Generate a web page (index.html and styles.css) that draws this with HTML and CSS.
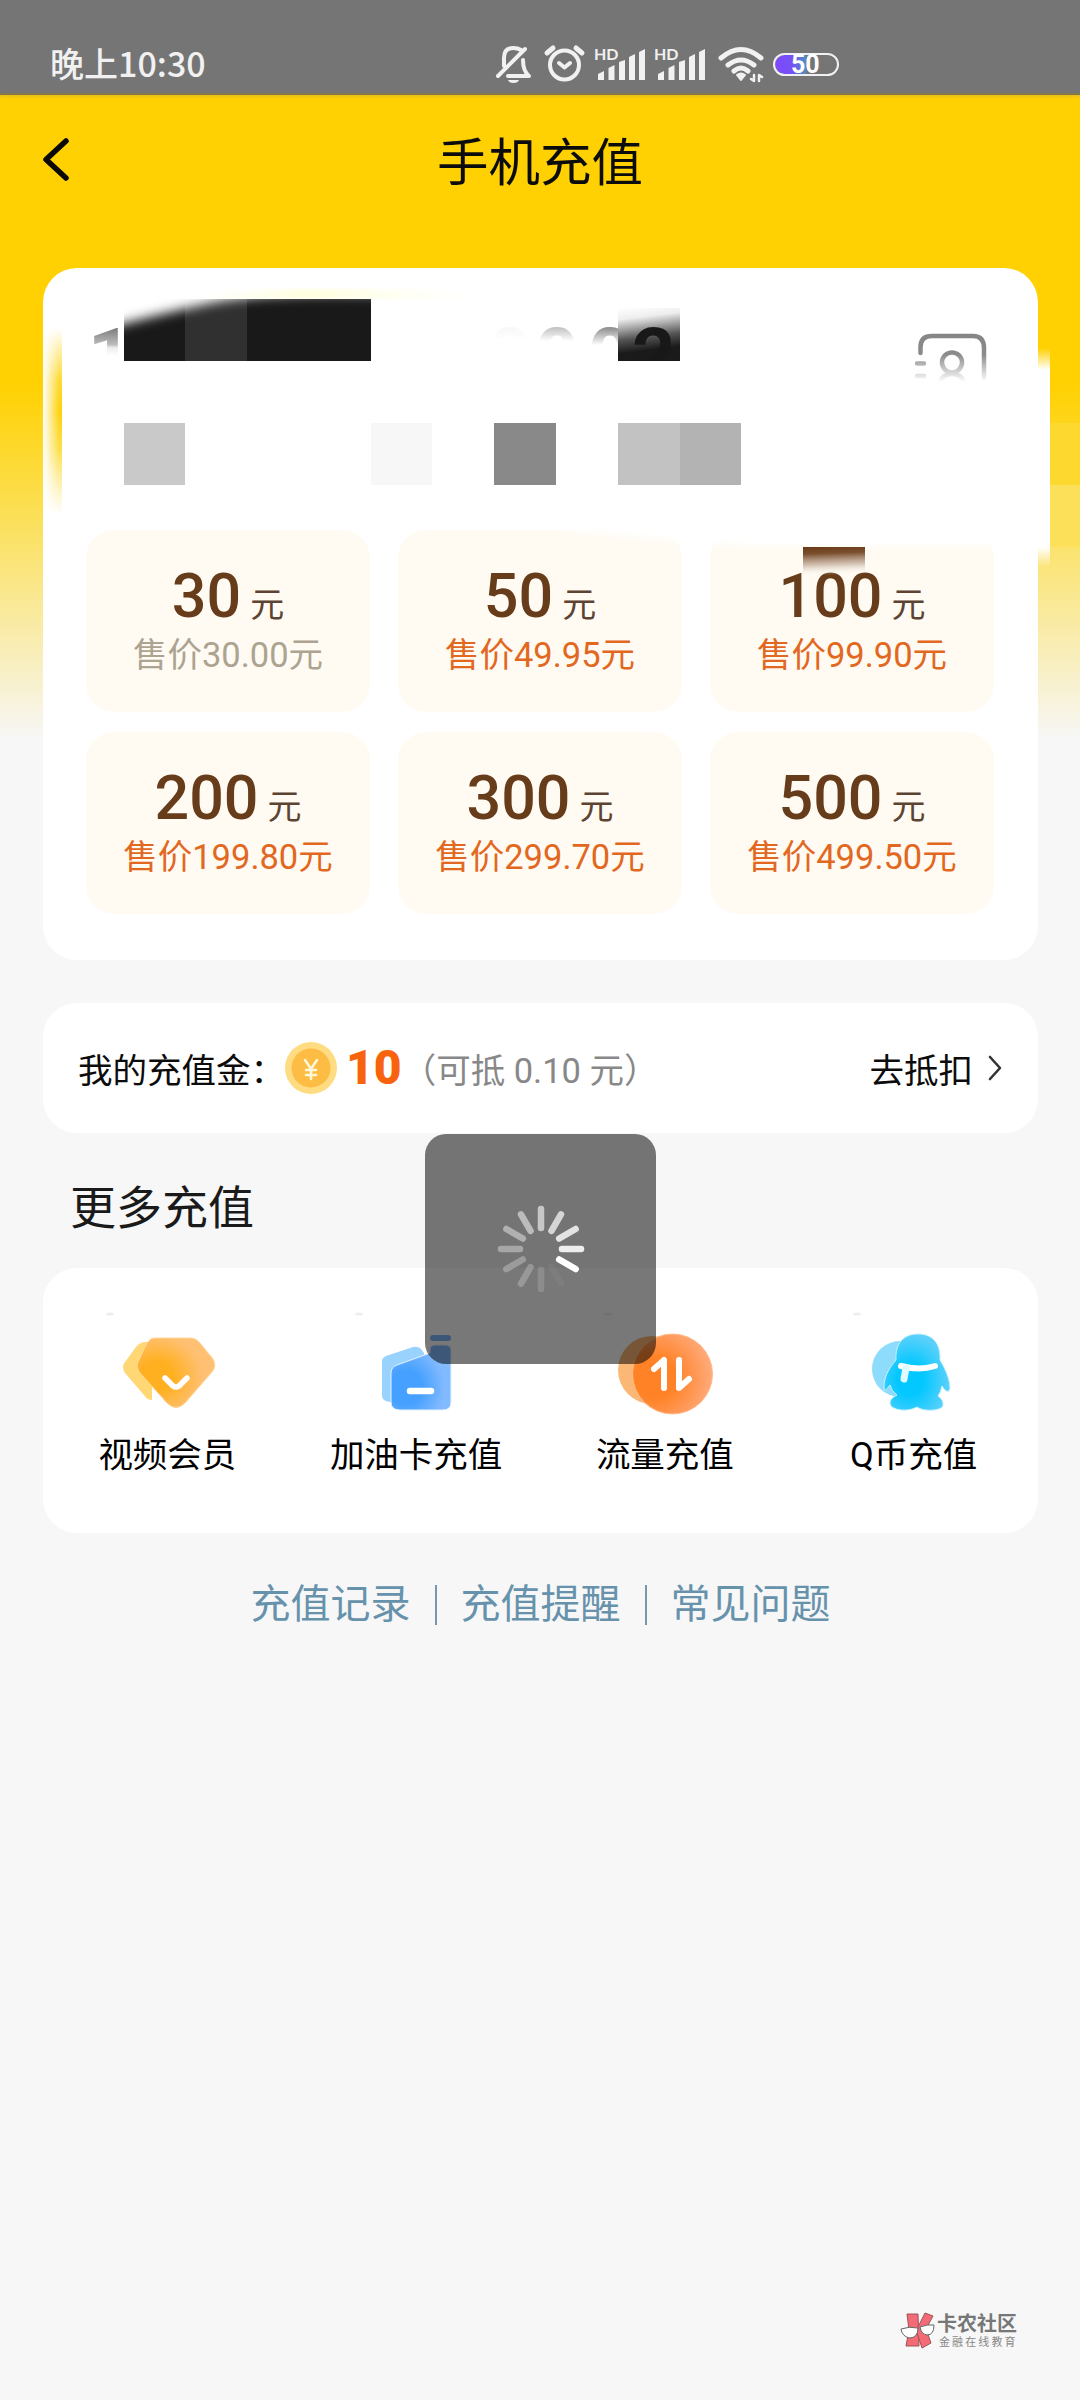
FILE: index.html
```html
<!DOCTYPE html>
<html lang="zh-CN">
<head>
<meta charset="utf-8">
<title>手机充值</title>
<link rel="stylesheet" href="styles.css">
</head>
<body>
<div class="screen">
  <header class="status">
    <span class="clock">晚上10:30</span>
    <svg class="status-icons" width="350" height="44" viewBox="492 42 350 44" fill="none" stroke="#f1f1f1" stroke-width="4" stroke-linecap="round" stroke-linejoin="round">
      <path d="M508 76H529Q523 71 523 60M504 66V58Q504 48 513 48Q518 48 521 50M498 76L525 49"/>
      <path d="M508 80H519Q518 83 513.500 83Q509 83 508 80Z" fill="#f1f1f1" stroke="none"/>
      <circle cx="564.500" cy="65" r="14.500"/><path d="M559 63L564.500 67.500L570 63"/>
      <path d="M547 53L553 48M576 48L582 53" stroke-width="5"/>
      <g fill="#f1f1f1" stroke="none">
        <path id="sig" d="M598 74L604 71V80H598ZM608.500 68L614.500 65V80H608.500ZM619 62L625 60V80H619ZM629 57L635 54V80H629ZM639 52L645 49V80H639Z"/>
        <use href="#sig" x="60"/>
        <text class="hd" x="594" y="60">HD</text><text class="hd" x="654" y="60">HD</text>
        <path d="M737 75Q741 72 745 75L741 80Z" stroke="#f1f1f1" stroke-width="2"/>
      </g>
      <path d="M721 58Q741 41 761 58M728 65Q741 55 754 65M734 71Q741 65 748 71" stroke-width="5"/>
      <path d="M754 75V81L751 79M759 81V75L762 77" stroke-width="2.500"/>
      <defs><linearGradient id="bat"><stop offset="0" stop-color="#8048ff"/><stop offset=".55" stop-color="#7652f4"/><stop offset="1" stop-color="#4c8fc4"/></linearGradient></defs>
      <path d="M806 55H785A9.500 9.500 0 0 0 785 74H806Z" fill="url(#bat)" stroke="none"/>
      <rect x="774" y="54" width="64" height="21" rx="10.500" stroke-width="2"/>
      <text class="bat" x="791" y="73">50</text>
    </svg>
  </header>

  <nav class="bar">
    <svg class="back" width="32" height="48" viewBox="0 0 32 48"><path d="M28 5L8 23.500L28 42" fill="none" stroke="#0b0906" stroke-width="5.500" stroke-linecap="round" stroke-linejoin="round"/></svg>
    <h1>手机充值</h1>
  </nav>

  <main>
    <section class="card topup">
      <div class="grid">
        <div class="tile"><p class="face"><b>30</b>元</p><p class="price plain">售价30.00元</p></div>
        <div class="tile"><p class="face"><b>50</b>元</p><p class="price">售价49.95元</p></div>
        <div class="tile"><p class="face"><b>100</b>元</p><p class="price">售价99.90元</p></div>
        <div class="tile"><p class="face"><b>200</b>元</p><p class="price">售价199.80元</p></div>
        <div class="tile"><p class="face"><b>300</b>元</p><p class="price">售价299.70元</p></div>
        <div class="tile"><p class="face"><b>500</b>元</p><p class="price">售价499.50元</p></div>
      </div>
      <svg class="redact" width="1080" height="332" viewBox="0 268 1080 332">
        <defs>
          <linearGradient id="side" x1="0" x2="0" y1="328" y2="515" gradientUnits="userSpaceOnUse"><stop offset="0" stop-color="#ffd102" stop-opacity="0"/><stop offset=".28" stop-color="#ffd102" stop-opacity=".8"/><stop offset=".45" stop-color="#ffd310"/><stop offset=".65" stop-color="#fdda2c" stop-opacity=".85"/><stop offset="1" stop-color="#fde05c" stop-opacity="0"/></linearGradient>
          <linearGradient id="edge"><stop offset="0" stop-color="#fff"/><stop offset="1" stop-color="#fff" stop-opacity="0"/></linearGradient>
          <linearGradient id="one" x1="0" x2="0" y1="327" y2="356" gradientUnits="userSpaceOnUse"><stop offset="0" stop-color="#777"/><stop offset=".6" stop-color="#bbb"/><stop offset=".72" stop-color="#eee"/><stop offset="1" stop-color="#fff"/></linearGradient>
          <linearGradient id="dim" x1="0" x2="0" y1="327" y2="345" gradientUnits="userSpaceOnUse"><stop offset="0" stop-color="#8a8a8a"/><stop offset="1" stop-color="#fff"/></linearGradient>
          <linearGradient id="pale" x1="0" x2="0" y1="326" y2="341" gradientUnits="userSpaceOnUse"><stop offset="0" stop-color="#bbb"/><stop offset="1" stop-color="#fff"/></linearGradient>
          <linearGradient id="two" x1="0" x2=".15" y1="0" y2="1"><stop offset="0" stop-color="#fff"/><stop offset=".22" stop-color="#eee"/><stop offset=".6" stop-color="#555"/><stop offset=".85" stop-color="#1a1a1a"/></linearGradient>
          <linearGradient id="brown" x1="0" x2=".08" y1="0" y2="1"><stop offset="0" stop-color="#6a3a15"/><stop offset=".25" stop-color="#7b5030"/><stop offset=".65" stop-color="#ccb9a8" stop-opacity=".8"/><stop offset="1" stop-color="#fffbf2" stop-opacity="0"/></linearGradient>
          <linearGradient id="icon" x1="0" x2="0" y1="332" y2="382" gradientUnits="userSpaceOnUse"><stop offset="0" stop-color="#858585"/><stop offset=".45" stop-color="#8b8b8b"/><stop offset="1" stop-color="#fff"/></linearGradient>
          <linearGradient id="fade" x1="0" x2="0" y1="0" y2="1"><stop offset="0" stop-color="#fff" stop-opacity="0"/><stop offset="1" stop-color="#fff"/></linearGradient>
          <linearGradient id="glow"><stop offset="0" stop-color="#ffffdc" stop-opacity="0"/><stop offset=".4" stop-color="#ffffd8"/><stop offset="1" stop-color="#ffffe8" stop-opacity="0"/></linearGradient>
          <clipPath id="digits"><rect x="90" y="320" width="32" height="40"/><rect x="480" y="320" width="138" height="30"/></clipPath>
          <clipPath id="block"><rect x="124" y="299" width="247" height="62"/></clipPath>
          <clipPath id="cell"><rect x="618" y="299" width="62" height="62"/></clipPath>
          <filter id="soft"><feGaussianBlur stdDeviation="3"/></filter>
          <filter id="smear" x="-20%" y="-50%" width="140%" height="200%"><feGaussianBlur stdDeviation="6"/></filter>
        </defs>
        <rect x="43" y="328" width="19" height="187" fill="url(#side)"/>
        <rect x="43" y="328" width="16" height="187" fill="url(#edge)"/>
        <path d="M180 299Q330 280 500 299Z" fill="url(#glow)" filter="url(#soft)"/>
        <rect x="1037" y="348" width="13" height="22" fill="url(#fade)"/>
        <rect x="1037" y="370" width="13" height="177" fill="#fff"/>
        <rect x="1037" y="547" width="13" height="20" fill="url(#fade)" transform="rotate(180 1043.500 557)"/>
        <rect x="1050" y="423" width="30" height="62" fill="#fdd82e"/>
        <rect x="1050" y="485" width="30" height="62" fill="#fce05a"/>
        <path d="M560 525H1010V546H750Q690 542 560 529Z" fill="#fff" filter="url(#soft)"/>
        <g clip-path="url(#digits)"><text class="number" x="88" y="382" fill="url(#one)">1</text><text class="number" x="488" y="382" fill="url(#pale)" opacity=".12">0</text><text class="number" x="535" y="382" fill="url(#pale)">0</text><text class="number" x="588" y="382" fill="url(#dim)">0</text></g>
        <g clip-path="url(#block)">
          <rect x="124" y="299" width="247" height="62" fill="#191919"/>
          <rect x="185" y="299" width="62" height="62" fill="#303030"/>
          <path d="M80 270H400V294Q260 291 210 303Q160 314 100 330Z" fill="#fff" filter="url(#smear)"/>
        </g>
        <rect x="618" y="308" width="62" height="53" fill="url(#two)"/>
        <g clip-path="url(#cell)"><text class="number" x="632" y="382" fill="#181818">2</text></g>
        <g fill="none" stroke="url(#icon)" stroke-width="4.500" stroke-linecap="round"><path d="M920.500 353V347Q920.500 336 932 336H973Q984 336 984 348V378"/><circle cx="952" cy="362.500" r="10"/><path d="M917 363.500H924M917 376H924M940 382Q943 374 952 374Q961 374 964 382"/></g>
        <path d="M124 423H185V485H124Z" fill="#c9c9c9"/><path d="M371 423H432V485H371Z" fill="#f7f7f7"/><path d="M494 423H556V485H494Z" fill="#898989"/><path d="M618 423H680V485H618Z" fill="#c2c2c2"/><path d="M680 423H741V485H680Z" fill="#b3b3b3"/>
        <rect x="803" y="547" width="62" height="29" fill="url(#brown)"/>
      </svg>
    </section>

    <section class="card credit">
      <span class="credit-label">我的充值金：</span>
      <svg class="coin" width="52" height="52" viewBox="0 0 52 52"><circle cx="26" cy="26" r="26" fill="#ffdc82"/><circle cx="26" cy="26" r="19.500" fill="#fdbc43"/><path d="M20 18L26 27L32 18M26 27V37M21 28H31M21 33H31" fill="none" stroke="#fff8d8" stroke-width="2.600" stroke-linecap="round"/></svg>
      <strong>10</strong>
      <span class="note">（可抵 0.10 元）</span>
      <span class="go">去抵扣</span>
      <svg class="chev" width="16" height="28" viewBox="0 0 16 28"><path d="M3 3L13 14L3 25" fill="none" stroke="#333" stroke-width="2.600" stroke-linecap="round" stroke-linejoin="round"/></svg>
    </section>

    <h2>更多充值</h2>

    <section class="card menu">
      <div class="item">
        <svg class="pic" width="110" height="90" viewBox="112 1325 110 90">
          <defs><radialGradient id="y" cx=".25" cy=".55" r=".6"><stop offset=".35" stop-color="#ffb020"/><stop offset="1" stop-color="#ffc074"/></radialGradient></defs>
          <path d="M146 1342H152V1400Q147 1400 144 1395L125 1373Q121 1367 125 1362L136 1347Q140 1342 146 1342Z" fill="#ffd775"/>
          <path d="M154 1338H191Q196 1338 200 1343L213 1359Q217 1366 212 1372L185 1403Q176 1412 167 1403L140 1373Q135 1366 139 1360L146 1345Q150 1338 154 1338Z" fill="url(#y)" stroke="#ffd69a"/>
          <path d="M165 1378L173 1386Q176 1388 179 1386L187 1378" fill="none" stroke="#fff" stroke-width="5.500" stroke-linecap="round"/>
          <ellipse cx="110" cy="1314" rx="4" ry="1.500" fill="#eee"/>
        </svg><span>视频会员</span>
      </div>
      <div class="item">
        <svg class="pic" width="110" height="90" viewBox="361 1325 110 90">
          <defs><radialGradient id="b" cx=".25" cy=".65" r=".65"><stop offset=".4" stop-color="#45a0ff"/><stop offset="1" stop-color="#82baff"/></radialGradient></defs>
          <path d="M382 1361Q382 1358 386 1356L413 1347Q418 1346 421 1349L424 1353V1402H390Q382 1401 382 1396Z" fill="#99d2fc"/>
          <path d="M391 1373Q391 1367 397 1365L430 1353V1350Q430 1345 435 1345H445Q451 1345 451 1350V1402Q451 1410 443 1410H400Q391 1410 391 1402Z" fill="url(#b)" stroke="#e4f4ff"/>
          <path d="M433 1338H448" stroke="#80b9ff" stroke-width="6" stroke-linecap="round"/><path d="M410 1391H431" stroke="#fff" stroke-width="6.500" stroke-linecap="round"/>
          <ellipse cx="359" cy="1314" rx="4" ry="1.500" fill="#eee"/>
        </svg><span>加油卡充值</span>
      </div>
      <div class="item">
        <svg class="pic" width="110" height="90" viewBox="610 1325 110 90">
          <defs><radialGradient id="o" cx=".28" cy=".55" r=".72"><stop offset=".35" stop-color="#ff8226"/><stop offset="1" stop-color="#ffaa7b"/></radialGradient></defs>
          <circle cx="652" cy="1370" r="34" fill="#fab775"/><circle cx="672.500" cy="1374" r="40" fill="url(#o)" stroke="#ffba8a"/>
          <path d="M654 1369L664 1360V1388M679 1360V1388L689 1379" fill="none" stroke="#fff" stroke-width="6" stroke-linecap="round" stroke-linejoin="round"/>
          <ellipse cx="608" cy="1314" rx="4" ry="1.500" fill="#eee"/>
        </svg><span>流量充值</span>
      </div>
      <div class="item">
        <svg class="pic" width="110" height="90" viewBox="859 1325 110 90">
          <defs><radialGradient id="q" cx=".4" cy=".6" r=".58"><stop offset=".35" stop-color="#03c8ff"/><stop offset="1" stop-color="#5ad0fb"/></radialGradient></defs>
          <circle cx="900" cy="1369" r="28" fill="#8edcfb"/>
          <path d="M896 1360C895 1344 903 1334 918 1334C933 1334 941 1344 940 1360C946 1370 950 1380 950 1388C949 1394 945 1391 942 1386Q941 1392 938 1396Q944 1400 943 1406C941 1411 923 1412 917 1407C909 1412 892 1411 890 1404C890 1399 893 1397 897 1395Q891 1391 890 1385Q884 1394 884 1387C884 1378 888 1369 896 1360Z" fill="url(#q)" stroke="#c8f2ff"/>
          <path d="M901 1366Q919 1371 935 1366" fill="none" stroke="#fff" stroke-width="6" stroke-linecap="round"/><path d="M906 1368L904 1379" stroke="#e0faff" stroke-width="7" stroke-linecap="round"/>
          <ellipse cx="857" cy="1314" rx="4" ry="1.500" fill="#eee"/>
        </svg><span>Q币充值</span>
      </div>
    </section>

    <div class="links"><a>充值记录</a><i></i><a>充值提醒</a><i></i><a>常见问题</a></div>
  </main>

  <footer class="mark">
    <svg width="36" height="38" viewBox="0 0 36 38"><g fill="#f26b76" stroke="#9d5258"><path d="M7 2L18 2L19 34L6 34L9 18Z"/><path d="M25 1L33 4L26 17L31 31L22 36L17 21L18 15Z"/></g><g fill="#fff" stroke="#666"><path d="M1 17Q9 14 18 16Q18 26 9 26Q2 24 1 17Z"/><path d="M20 15Q28 12 34 13Q34 23 27 23Q21 22 20 15Z"/></g></svg>
    <div><b>卡农社区</b><small>金融在线教育</small></div>
  </footer>

  <div class="loading">
    <svg width="90" height="90" viewBox="-45 -45 90 90" stroke="#fff" stroke-width="6.500" stroke-linecap="round">
      <path d="M0-40V-21" opacity=".6"/><path d="M0-40V-21" transform="rotate(30)" opacity=".7"/><path d="M0-40V-21" transform="rotate(60)" opacity=".8"/><path d="M0-40V-21" transform="rotate(90)" opacity=".88"/><path d="M0-40V-21" transform="rotate(120)"/><path d="M0-40V-21" transform="rotate(150)" opacity=".04"/><path d="M0-40V-21" transform="rotate(180)" opacity=".15"/><path d="M0-40V-21" transform="rotate(210)" opacity=".24"/><path d="M0-40V-21" transform="rotate(240)" opacity=".28"/><path d="M0-40V-21" transform="rotate(270)" opacity=".36"/><path d="M0-40V-21" transform="rotate(300)" opacity=".43"/><path d="M0-40V-21" transform="rotate(330)" opacity=".52"/>
    </svg>
  </div>
</div>
</body>
</html>
```
FILE: styles.css
```css
* { box-sizing: border-box; margin: 0; padding: 0; }
body { background: #f7f7f7; font-family: Roboto, "Noto Sans CJK SC", sans-serif; color: #0c0c0c; }
svg { display: block; flex: none; }
.screen {
  position: relative; width: 1080px; height: 2400px; display: flex; flex-direction: column; overflow: hidden;
  background: linear-gradient(#ffd102 0, #ffd102 385px, #fbe05a 520px, #f7f7f7 740px);
}
.status { height: 95px; background: #757575; border-bottom: 2px solid #857847; display: flex; padding: 42px 0 0 50px; flex: none; box-shadow: 0 1px 4px #d8b52a; }
.clock { width: 442px; font: 500 34px/42px "Noto Sans CJK SC", sans-serif; color: #f1f1f1; }
.hd { font: 700 16px Lato, sans-serif; }
.bat { font: 700 25px Roboto, sans-serif; fill: #fff; stroke: none; }
.bar { height: 173px; flex: none; display: flex; padding: 0 38px; }
.back { margin-top: 41px; }
h1 { flex: 1; margin-right: 32px; text-align: center; font-size: 51.5px; line-height: 60px; font-weight: 400; padding-top: 39px; }
main { display: flex; flex-direction: column; padding: 0 42px 0 43px; }
.card { background: #fff; border-radius: 34px; }
.topup { height: 692px; padding: 262px 43px 0; position: relative; }
.redact { position: absolute; left: -43px; top: 0; pointer-events: none; }
.number { font: 700 76px Roboto, sans-serif; }
.grid { display: grid; grid-template-columns: repeat(3, 284px); column-gap: 28px; row-gap: 20px; }
.tile { height: 182px; background: #fffbf3; border-radius: 28px; text-align: center; padding-top: 32px; }
.face { font-size: 34px; line-height: 68px; color: #5d4332; }
.face b { font-size: 61px; font-weight: 500; color: #673c1b; margin-right: 9px; line-height: 68px; }
.price { font-size: 34.5px; line-height: 50px; color: #e2681f; margin-top: -9px; }
.price.plain { color: #ada391; }
.credit { height: 130px; margin-top: 43px; display: flex; align-items: center; padding: 0 35px 0 35px; font-size: 34.5px; }
.credit-label { width: 207px; white-space: nowrap; }
.coin { margin-right: 9px; }
.credit strong { font-size: 48px; line-height: 50px; font-weight: 900; color: #f8640d; }
.note { color: #888; white-space: nowrap; }
.go { margin-left: auto; }
.chev { margin-left: 14px; }
h2 { font-size: 46px; line-height: 60px; font-weight: 400; color: #1a1a1a; margin: 45px 0 30px 27px; }
.menu { height: 265px; display: grid; grid-template-columns: repeat(4, 1fr); padding-top: 57px; }
.item { display: flex; flex-direction: column; align-items: center; font-size: 34.5px; line-height: 50px; gap: 15px; color: #000; }
.pic { overflow: visible; }
.links { display: flex; justify-content: center; align-items: center; gap: 24px; margin-top: 42px; font-size: 40px; line-height: 60px; color: #6792ac; }
.links i { width: 2px; height: 40px; background: #7598ae; }
.mark { margin-top: auto; height: 100px; display: flex; padding: 12px 0 0 900px; gap: 1px; color: #888; }
.mark b { display: block; font-size: 20px; line-height: 25px; font-weight: 700; color: #777; }
.mark small { display: block; font-size: 11px; line-height: 12px; letter-spacing: 2.1px; margin-left: 2px; white-space: nowrap; }
.loading { position: absolute; left: 425px; top: 1134px; width: 231px; height: 230px; border-radius: 21px; background: rgba(0,0,0,.53); display: flex; align-items: center; justify-content: center; }
```
